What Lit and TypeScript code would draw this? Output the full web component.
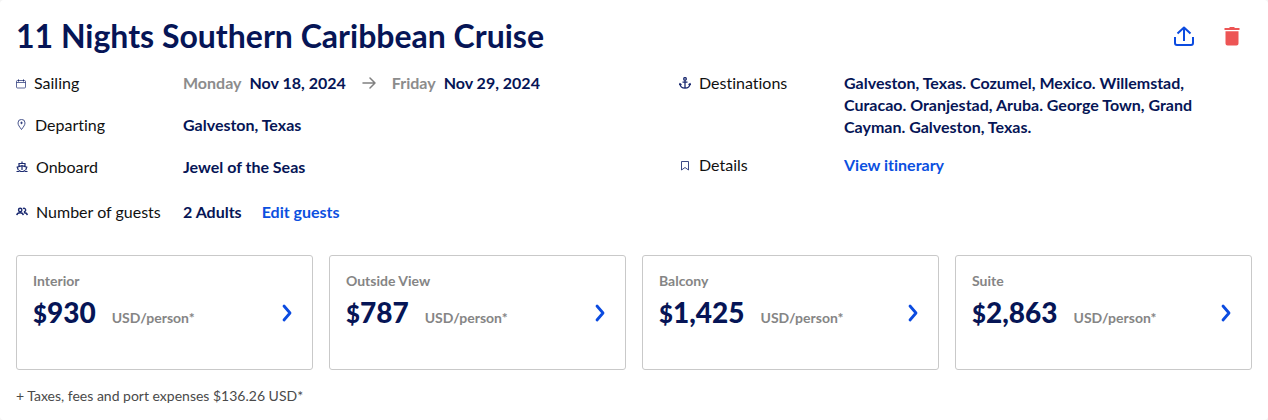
import { LitElement, html, css, svg } from "lit";
import { customElement } from "lit/decorators.js";

interface Fare {
  room: string;
  price: string;
}

const fares: Fare[] = [
  { room: "Interior", price: "930" },
  { room: "Outside View", price: "787" },
  { room: "Balcony", price: "1,425" },
  { room: "Suite", price: "2,863" },
];

const icons = {
  calendar: svg`<g stroke-opacity=".7"><rect x=".5" y="3.500" width="9" height="7.500" rx="1"/><path d="M.5 5.500h9"/></g><path d="M2.500 2.500v2M7.500 2.500v2"/>`,
  pin: svg`<path stroke-opacity=".8" d="M5.500 10.500C3.600 7.900 2 6 2 3.900a3.500 3.500 0 0 1 7 0c0 2.100-1.600 4-3.500 6.600z"/><path stroke-opacity=".8" d="M5.500 2.600v2.600M4.200 3.900h2.600"/>`,
  ship: svg`<path stroke-width="1.200" d="M6 .5v2M3 5V2.500h6V5M2.300 9 1.200 6.200 6 4.600l4.800 1.600L9.700 9M6 4.600V9M.5 10.500h2l1-.8 1.200.8h2.600l1.200-.8 1 .8h2"/>`,
  guests: svg`<g stroke-width="1.400"><circle cx="4.200" cy="4" r="1.700"/><path d="M.8 9.200C1 7.400 2.400 6.800 4.200 6.800s2.900.7 3.100 2.400"/><path d="M7 2.600a1.700 1.700 0 1 1 .8 3.100M8 6.800c2-.2 3.100.7 3.300 2.400"/></g>`,
  anchor: svg`<g stroke-width="1.300"><circle cx="6" cy="1.900" r="1.300"/><path d="M6 3.200v8M3.500 5.200h5M1 7C1.300 9.600 3.200 11.100 6 11.100S10.700 9.600 11 7M.2 8 1 6.700l1.500 1M11.800 8 11 6.700l-1.500 1"/></g>`,
  bookmark: svg`<path stroke-opacity=".85" d="M2.500 2.500h7v8.500L6 8.500 2.500 11z"/>`,
};

@customElement("app-root")
export class AppRoot extends LitElement {
  static styles = css`
    :host {
      display: block;
      background: #f4f4f4;
      font-family: Lato, "Liberation Sans", sans-serif;
      font-size: 16px;
      line-height: 22px;
      font-variant-ligatures: none;
      color: #111;
    }
    .panel {
      background: #fff;
      border-radius: 4px;
      padding: 16px 16px 14px;
    }
    .head {
      display: flex;
      align-items: center;
      justify-content: space-between;
      margin-bottom: 16px;
    }
    .title {
      margin: 0;
      font-size: 32px;
      line-height: 40px;
      font-weight: 700;
      color: #061556;
    }
    .actions {
      display: flex;
      gap: 24px;
      padding-right: 8px;
    }
    .action {
      display: flex;
      border: 0;
      padding: 0;
      background: none;
      cursor: pointer;
    }
    .facts {
      display: grid;
      grid-template-columns: 663px 1fr;
      align-items: start;
      margin: 0 0 32px;
    }
    .list {
      display: flex;
      flex-direction: column;
      gap: 20px;
      margin: 0;
    }
    .list.side {
      gap: 16px;
    }
    .row {
      display: grid;
      grid-template-columns: 167px 1fr;
    }
    .side .row {
      grid-template-columns: 165px 1fr;
      padding-right: 48px;
    }
    .row.guests {
      padding-top: 3px;
    }
    .term {
      display: flex;
      align-items: center;
      align-self: start;
      gap: 8px;
    }
    .icon {
      flex: none;
      fill: none;
      stroke: #1b2a70;
      stroke-width: 1;
    }
    .value {
      display: flex;
      align-items: center;
      margin: 0;
      font-weight: 700;
      color: #061556;
    }
    .day {
      color: #8c8c8c;
      margin-right: 8px;
    }
    .arrow {
      margin: 0 16px;
    }
    .link {
      color: #0b50e0;
      text-decoration: none;
    }
    .edit {
      margin-left: 20px;
    }
    .fares {
      display: grid;
      grid-template-columns: repeat(4, 1fr);
      gap: 16px;
      margin-bottom: 16px;
    }
    .fare {
      display: flex;
      align-items: flex-start;
      justify-content: space-between;
      border: 1px solid #c9c9c9;
      border-radius: 3px;
      padding: 16px 16px 35px;
      color: #858585;
      font-size: 14px;
      line-height: 18px;
      font-weight: 700;
      text-decoration: none;
    }
    .cost {
      display: flex;
      align-items: baseline;
      gap: 16px;
      margin-top: 6px;
      line-height: 32px;
    }
    .price {
      color: #061556;
      font-size: 28px;
      font-weight: 900;
    }
    .currency {
      font-size: 24px;
    }
    .chevron {
      margin-top: 32px;
    }
    .note {
      margin: 0;
      font-size: 14px;
      line-height: 20px;
      color: #4a4a4a;
    }
  `;

  private icon(shape: unknown, width: number) {
    return html`<svg class="icon" width=${width} height="12" viewBox="0 0 ${width} 12" aria-hidden="true">${shape}</svg>`;
  }

  render() {
    return html`
      <main class="panel">
        <header class="head">
          <h1 class="title">11 Nights Southern Caribbean Cruise</h1>
          <div class="actions">
            <button class="action" aria-label="Share">
              <svg width="24" height="24" viewBox="0 0 24 24" fill="none" stroke="#0b4be0" stroke-width="2" stroke-linejoin="round">
                <path d="M12 17V3.500M5.500 9.500 12 3.500l6.500 6M3 13v6a2 2 0 0 0 2 2h14a2 2 0 0 0 2-2v-6" />
              </svg>
            </button>
            <button class="action" aria-label="Delete">
              <svg width="24" height="24" viewBox="0 0 24 24" fill="#ed5555">
                <path d="M4.500 4H9l1-1h4l1 1h4.500v2h-15zM5.500 7.200h13V19.500a2 2 0 0 1-2 2h-9a2 2 0 0 1-2-2z" />
              </svg>
            </button>
          </div>
        </header>

        <div class="facts">
          <dl class="list">
            <div class="row">
              <dt class="term">${this.icon(icons.calendar, 10)}Sailing</dt>
              <dd class="value">
                <span class="day">Monday</span><span>Nov 18, 2024</span>
                <svg class="arrow" width="14" height="12" viewBox="0 0 14 12" fill="none" stroke="#808080" stroke-width="1.500" stroke-linecap="round" stroke-linejoin="round" aria-label="to">
                  <path d="M1 6h12M8 1l5 5-5 5" />
                </svg>
                <span class="day">Friday</span><span>Nov 29, 2024</span>
              </dd>
            </div>
            <div class="row">
              <dt class="term">${this.icon(icons.pin, 11)}Departing</dt>
              <dd class="value">Galveston, Texas</dd>
            </div>
            <div class="row">
              <dt class="term">${this.icon(icons.ship, 12)}Onboard</dt>
              <dd class="value">Jewel of the Seas</dd>
            </div>
            <div class="row guests">
              <dt class="term">${this.icon(icons.guests, 12)}Number of guests</dt>
              <dd class="value">2 Adults<a class="link edit" href="#guests">Edit guests</a></dd>
            </div>
          </dl>
          <dl class="list side">
            <div class="row">
              <dt class="term">${this.icon(icons.anchor, 12)}Destinations</dt>
              <dd class="value">
                Galveston, Texas. Cozumel, Mexico. Willemstad, Curacao. Oranjestad, Aruba. George Town, Grand Cayman.
                Galveston, Texas.
              </dd>
            </div>
            <div class="row">
              <dt class="term">${this.icon(icons.bookmark, 12)}Details</dt>
              <dd class="value"><a class="link" href="#itinerary">View itinerary</a></dd>
            </div>
          </dl>
        </div>

        <section class="fares" aria-label="Fares">
          ${fares.map(
            (fare) => html`
              <a class="fare" href="#rooms">
                <div>
                  <div>${fare.room}</div>
                  <div class="cost">
                    <span class="price"><span class="currency">$</span>${fare.price}</span>
                    <span>USD/person*</span>
                  </div>
                </div>
                <svg class="chevron" width="18" height="18" viewBox="0 0 18 18" fill="none" stroke="#0b4be0" stroke-width="2.800" stroke-linecap="round" stroke-linejoin="round">
                  <path d="m6 2 6 7-6 7" />
                </svg>
              </a>
            `
          )}
        </section>
        <p class="note">+ Taxes, fees and port expenses $136.26 USD*</p>
      </main>
    `;
  }
}
